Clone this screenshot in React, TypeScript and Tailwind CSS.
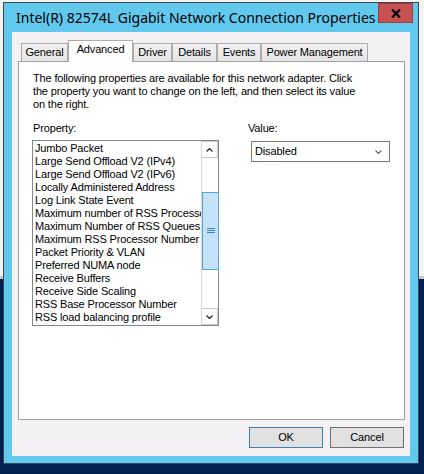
// Network adapter properties dialog — Advanced tab.

const props = [
  'Jumbo Packet',
  'Large Send Offload V2 (IPv4)',
  'Large Send Offload V2 (IPv6)',
  'Locally Administered Address',
  'Log Link State Event',
  'Maximum number of RSS Processors',
  'Maximum Number of RSS Queues',
  'Maximum RSS Processor Number',
  'Packet Priority & VLAN',
  'Preferred NUMA node',
  'Receive Buffers',
  'Receive Side Scaling',
  'RSS Base Processor Number',
  'RSS load balancing profile',
]

const tabs = [
  { label: 'General', w: 'w-[47px]' },
  { label: 'Advanced', w: 'w-[65px]', active: true },
  { label: 'Driver', w: 'w-[39px]' },
  { label: 'Details', w: 'w-[45px]' },
  { label: 'Events', w: 'w-[44px]' },
  { label: 'Power Management', w: 'w-[107px]' },
]

function Chevron({ up, className }: { up?: boolean; className?: string }) {
  return (
    <svg width="7" height="4" viewBox="0 0 7 4" className={className}>
      <polyline
        points={up ? '0.5,3.5 3.5,0.5 6.5,3.5' : '0.5,0.5 3.5,3.5 6.5,0.5'}
        fill="none"
        stroke="currentColor"
        strokeWidth="1.2"
      />
    </svg>
  )
}

function ScrollBar() {
  return (
    <div className="flex w-[17px] shrink-0 flex-col border-l border-[#d8d8d8] bg-white">
      <div className="flex h-[17px] items-center justify-center border border-l-0 border-[#c8c8c8] text-[#222]">
        <Chevron up />
      </div>
      <div className="relative flex-1">
        <div className="absolute left-0 top-[34px] flex h-[78px] w-[17px] items-center justify-center border border-[#5aa5d8] bg-[#c4e3f8]">
          <svg width="8" height="6" viewBox="0 0 8 6">
            <path d="M0 0.5h8M0 2.5h8M0 4.5h8" stroke="#3a86c3" strokeWidth="1" />
          </svg>
        </div>
      </div>
      <div className="flex h-[17px] items-center justify-center border border-l-0 border-[#c8c8c8] text-[#222]">
        <Chevron />
      </div>
    </div>
  )
}

export default function App() {
  return (
    <div className="relative h-[474px] w-[424px] overflow-hidden bg-[linear-gradient(to_bottom,#f3f3f3_0px,#f3f3f3_276px,#c9c9c9_276px,#c9c9c9_279px,#022052_279px)] font-['Liberation_Sans',Arial,sans-serif] text-[11px] leading-[13px] tracking-[-0.15px] text-black">
      {/* window frame */}
      <div className="absolute left-[3px] top-[2px] flex h-[462px] w-[416px] flex-col border border-[#3b4650] bg-[#62c9ee]">
        <div className="flex h-[29px] shrink-0 items-start">
          <span className="ml-[12px] mt-[5px] min-w-0 flex-1 overflow-hidden whitespace-nowrap font-['Noto_Sans','Open_Sans',sans-serif] text-[14px] leading-[20px] tracking-normal text-black">
            Intel(R) 82574L Gigabit Network Connection Properties
          </span>
          <div className="mr-[5px] flex h-[20px] w-[35px] shrink-0 items-center justify-center border border-[#a13c3c] bg-[#c75050]">
            <svg width="10" height="9" viewBox="0 0 10 9">
              <path d="M1 0.5l8 8M9 0.5l-8 8" stroke="#000" strokeWidth="2.2" />
            </svg>
          </div>
        </div>

        {/* client area */}
        <div className="mx-[8px] mb-[7px] flex flex-1 flex-col bg-[#f4f1f4] pl-[6px] pr-[5px] pt-[8px]">
          <div className="flex h-[21px] items-end pl-[3px]">
            {tabs.map((t) =>
              t.active ? (
                <div
                  key={t.label}
                  className={`relative z-10 -mb-px h-[22px] ${t.w} border border-b-0 border-[#acacac] bg-white pt-[2px] text-center`}
                >
                  {t.label}
                </div>
              ) : (
                <div
                  key={t.label}
                  className={`h-[18px] ${t.w} border border-b-0 border-[#acacac] bg-[linear-gradient(to_bottom,#f2f2f2,#e5e5e5)] pt-[2px] text-center`}
                >
                  {t.label}
                </div>
              ),
            )}
          </div>

          <div className="flex h-[359px] flex-col border border-[#a0a0a0] bg-white pl-[13px] pt-[10px]">
            <p className="pl-[1px]">
              <span className="block">The following properties are available for this network adapter. Click</span>
              <span className="block">the property you want to change on the left, and then select its value</span>
              <span className="block">on the right.</span>
            </p>

            <div className="mt-[11px] flex">
              <div className="flex flex-col">
                <span className="pl-[1px]">Property:</span>
                <div className="mt-[5px] flex h-[186px] w-[187px] border border-[#828790] bg-white">
                  <ul className="min-w-0 flex-1 overflow-hidden whitespace-nowrap pl-[2px] pt-[1px]">
                    {props.map((p) => (
                      <li key={p}>{p}</li>
                    ))}
                  </ul>
                  <ScrollBar />
                </div>
              </div>

              <div className="ml-[29px] flex flex-col">
                <span>Value:</span>
                <div className="ml-[3px] mt-[6px] flex h-[21px] w-[139px] items-center justify-between border border-[#7a7a7a] bg-white pl-[3px] pr-[7px]">
                  <span>Disabled</span>
                  <Chevron className="text-[#6a6a6a]" />
                </div>
              </div>
            </div>
          </div>

          <div className="mt-[7px] flex justify-end gap-[7px] pr-[1px]">
            <button className="h-[21px] w-[74px] border border-[#3c7fb1] bg-[#e1e1e1]">OK</button>
            <button className="h-[21px] w-[74px] border border-[#707070] bg-[#e1e1e1]">Cancel</button>
          </div>
        </div>
      </div>
    </div>
  )
}
